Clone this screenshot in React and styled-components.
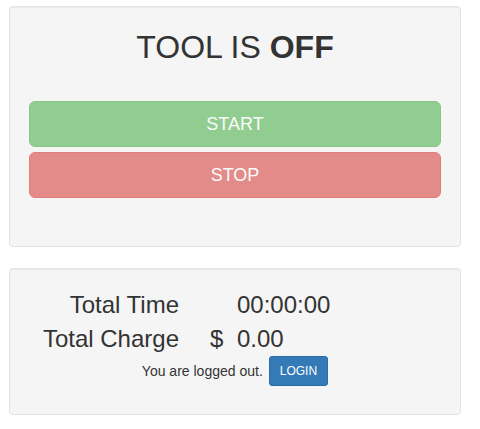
import React from "react";
import styled, { createGlobalStyle } from "styled-components";

const Global = createGlobalStyle`
  html, body { margin: 0; padding: 0; background: #fff; }
  body {
    font-family: "Liberation Sans", Arial, Helvetica, sans-serif;
    font-size: 14px;
    line-height: 1.42857;
    color: #333;
  }
  * { box-sizing: border-box; }
`;

const Page = styled.div`
  padding: 6px 0 0 9px;
`;

const Well = styled.section`
  width: 452px;
  background: #f5f5f5;
  border: 1px solid #e3e3e3;
  border-radius: 4px;
  box-shadow: inset 0 1px 1px rgba(0, 0, 0, 0.05);
  padding: 19px;
  margin-bottom: ${(p) => p.$mb || 0}px;
`;

const Title = styled.h1`
  margin: 4px 0 36px;
  font-size: 32px;
  line-height: 35px;
  font-weight: 400;
  text-align: center;
  color: #333;
  strong { font-weight: 700; }
`;

const ButtonStack = styled.div`
  display: flex;
  flex-direction: column;
  gap: 5px;
  margin-bottom: 29px;
`;

const BigButton = styled.button`
  display: block;
  width: 100%;
  height: 46px;
  padding: 10px 16px;
  font-family: inherit;
  font-size: 18px;
  line-height: 24px;
  color: #fff;
  border-radius: 6px;
  border: 1px solid ${(p) => (p.$variant === "danger" ? "#d43f3a" : "#4cae4c")};
  background: ${(p) => (p.$variant === "danger" ? "#d9534f" : "#5cb85c")};
  opacity: 0.65;
  cursor: not-allowed;
`;

const Stats = styled.div`
  display: grid;
  grid-template-columns: 150px 58px auto;
  font-size: 24px;
  line-height: 34px;
  color: #333;
`;

const Label = styled.div`
  text-align: right;
  white-space: nowrap;
`;

const Currency = styled.div`
  padding-left: 31px;
`;

const Value = styled.div``;

const LoginRow = styled.div`
  display: flex;
  justify-content: center;
  align-items: center;
  gap: 6px;
  margin-bottom: 9px;
  font-size: 14px;
  line-height: 20px;
`;

const SmallButton = styled.button`
  height: 30px;
  padding: 5px 10px;
  font-family: inherit;
  font-size: 12px;
  line-height: 18px;
  color: #fff;
  background: #337ab7;
  border: 1px solid #2e6da4;
  border-radius: 3px;
  cursor: pointer;
`;

export default function App() {
  return (
    <Page>
      <Global />
      <Well $mb={21}>
        <Title>
          TOOL IS <strong>OFF</strong>
        </Title>
        <ButtonStack>
          <BigButton $variant="success">START</BigButton>
          <BigButton $variant="danger">STOP</BigButton>
        </ButtonStack>
      </Well>
      <Well>
        <Stats>
          <Label>Total Time</Label>
          <Currency></Currency>
          <Value>00:00:00</Value>
          <Label>Total Charge</Label>
          <Currency>$</Currency>
          <Value>0.00</Value>
        </Stats>
        <LoginRow>
          <span>You are logged out.</span>
          <SmallButton>LOGIN</SmallButton>
        </LoginRow>
      </Well>
    </Page>
  );
}
